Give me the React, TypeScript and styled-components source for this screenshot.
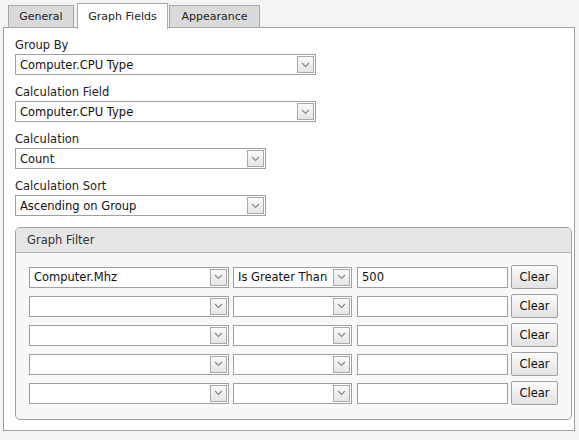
import styled, { createGlobalStyle } from "styled-components";

const GlobalStyle = createGlobalStyle`
  body {
    margin: 0;
    background: #f4f4f4;
    font-family: "DejaVu Sans", Tahoma, sans-serif;
    font-size: 11px;
    color: #222;
  }
`;

const Page = styled.div`
  width: 579px;
  height: 440px;
  padding: 0 4px 0 3px;
  box-sizing: border-box;
`;

const TabBar = styled.div`
  display: flex;
  align-items: flex-end;
  height: 28px;
  padding-left: 5px;
`;

const Tab = styled.div<{ $active?: boolean; $gap: number; $width: number }>`
  box-sizing: border-box;
  width: ${(p) => p.$width}px;
  height: ${(p) => (p.$active ? "26px" : "23px")};
  margin-right: ${(p) => p.$gap}px;
  margin-bottom: ${(p) => (p.$active ? "-1px" : "0")};
  display: flex;
  align-items: center;
  justify-content: center;
  border: 1px solid #a8a8a8;
  border-bottom: ${(p) => (p.$active ? "none" : "1px solid #a8a8a8")};
  background: ${(p) => (p.$active ? "#fff" : "#dadada")};
  color: #222;
  font-size: 11px;
  white-space: nowrap;
  position: relative;
  z-index: ${(p) => (p.$active ? 1 : 0)};
`;

const Panel = styled.div`
  box-sizing: border-box;
  height: 404px;
  margin-top: -1px;
  border: 1px solid #a0a0a0;
  background: #fff;
  padding: 10px 3px 0 11px;
`;

const Field = styled.div`
  margin-bottom: 10px;
`;

const Label = styled.div`
  height: 14px;
  line-height: 14px;
  margin-bottom: 2px;
  font-size: 11.5px;
  color: #222;
`;

const SelectBox = styled.div<{ $width: number }>`
  box-sizing: border-box;
  width: ${(p) => p.$width}px;
  height: 21px;
  border: 1px solid #a0a0a0;
  background: #fff;
  display: flex;
  align-items: center;
  padding: 0 1px 0 4px;
  font-size: 11.5px;
  color: #111;
`;

const SelectText = styled.span`
  flex: 1;
  white-space: nowrap;
  overflow: hidden;
`;

const ArrowBox = styled.span`
  box-sizing: border-box;
  width: 17px;
  height: 17px;
  border: 1px solid #a8a8a8;
  background: linear-gradient(#fafafa, #e6e6e6);
  display: flex;
  align-items: center;
  justify-content: center;
`;

const FilterSet = styled.div`
  box-sizing: border-box;
  width: 557px;
  height: 193px;
  margin-top: 11px;
  border: 1px solid #a0a0a0;
  border-radius: 5px;
  background: #f8f8f8;
  overflow: hidden;
`;

const FilterHeader = styled.div`
  height: 24px;
  line-height: 24px;
  padding-left: 11px;
  background: #e6e6e6;
  border-bottom: 1px solid #b4b4b4;
  font-size: 11.5px;
  color: #333;
`;

const FilterBody = styled.div`
  padding: 12px 0 0 13px;
  display: flex;
  flex-direction: column;
  gap: 5px;
`;

const FilterRow = styled.div`
  display: flex;
  align-items: center;
  height: 24px;
`;

const TextBox = styled.div`
  box-sizing: border-box;
  width: 151px;
  height: 21px;
  border: 1px solid #a0a0a0;
  background: #fff;
  margin-left: 5px;
  padding-left: 4px;
  line-height: 19px;
  font-size: 11.5px;
  color: #111;
`;

const ClearButton = styled.button`
  box-sizing: border-box;
  width: 47px;
  height: 24px;
  margin-left: 3px;
  border: 1px solid #a0a0a0;
  border-radius: 2px;
  background: linear-gradient(#fbfbfb, #e2e2e2);
  font-family: "DejaVu Sans", Tahoma, sans-serif;
  font-size: 11.5px;
  color: #111;
  padding: 0;
`;

const Gap = styled.span<{ $w: number }>`
  width: ${(p) => p.$w}px;
`;

function Chevron() {
  return (
    <svg width="9" height="6" viewBox="0 0 9 6">
      <path d="M1 1 L4.5 4.5 L8 1" fill="none" stroke="#8a8a8a" strokeWidth="1.2" />
    </svg>
  );
}

function Select({ width, value }: { width: number; value?: string }) {
  return (
    <SelectBox $width={width}>
      <SelectText>{value}</SelectText>
      <ArrowBox>
        <Chevron />
      </ArrowBox>
    </SelectBox>
  );
}

const fields = [
  { label: "Group By", value: "Computer.CPU Type", width: 301 },
  { label: "Calculation Field", value: "Computer.CPU Type", width: 301 },
  { label: "Calculation", value: "Count", width: 251 },
  { label: "Calculation Sort", value: "Ascending on Group", width: 251 },
];

const filters = [
  { field: "Computer.Mhz", op: "Is Greater Than", value: "500" },
  { field: "", op: "", value: "" },
  { field: "", op: "", value: "" },
  { field: "", op: "", value: "" },
  { field: "", op: "", value: "" },
];

export default function App() {
  return (
    <Page>
      <GlobalStyle />
      <TabBar>
        <Tab $gap={3} $width={66}>General</Tab>
        <Tab $active $gap={1} $width={91}>Graph Fields</Tab>
        <Tab $gap={0} $width={91}>Appearance</Tab>
      </TabBar>
      <Panel>
        {fields.map((f) => (
          <Field key={f.label}>
            <Label>{f.label}</Label>
            <Select width={f.width} value={f.value} />
          </Field>
        ))}
        <FilterSet>
          <FilterHeader>Graph Filter</FilterHeader>
          <FilterBody>
            {filters.map((r, i) => (
              <FilterRow key={i}>
                <Select width={200} value={r.field} />
                <Gap $w={4} />
                <Select width={119} value={r.op} />
                <TextBox>{r.value}</TextBox>
                <ClearButton>Clear</ClearButton>
              </FilterRow>
            ))}
          </FilterBody>
        </FilterSet>
      </Panel>
    </Page>
  );
}
